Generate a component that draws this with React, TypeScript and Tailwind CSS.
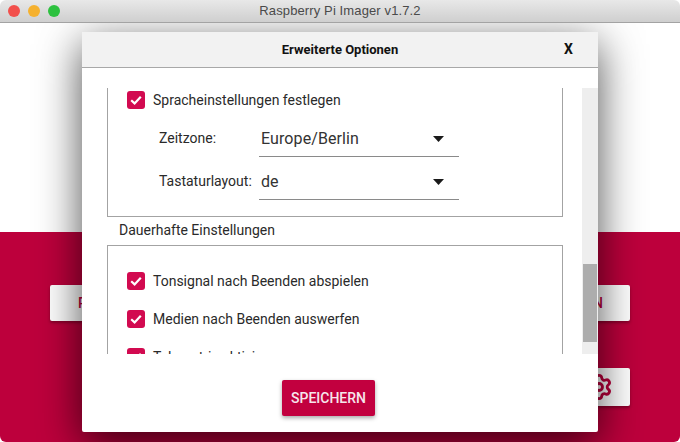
import { Settings } from "lucide-react";

function Check({ label }: { label: string }) {
  return (
    <div className="flex items-center gap-[8px] h-[18px] pl-[19px]">
      <span className="flex items-center justify-center w-[18px] h-[18px] rounded-[3px] bg-[#d20a50]">
        <svg width="14" height="14" viewBox="0 0 14 14" fill="none">
          <path d="M2.2 7.2 L5.6 10.4 L11.8 3.8" stroke="#fff" strokeWidth="2.2" />
        </svg>
      </span>
      <span className="text-[14px] leading-[18px] text-[#2a2a2a]">{label}</span>
    </div>
  );
}

function Select({ label, value }: { label: string; value: string }) {
  return (
    <div className="flex items-start pl-[51px]">
      <span className="w-[100px] text-[14px] leading-[20px] text-[#2a2a2a] pt-[7px]">{label}</span>
      <div className="w-[200px] h-[36px] border-b border-[#8a8a8a] flex items-center justify-between pl-[2px] pr-[15px]">
        <span className="text-[16px] leading-[20px] text-[#333] tracking-[0.1px]">{value}</span>
        <svg width="11" height="6" viewBox="0 0 11 6">
          <path d="M0 0 H11 L5.5 6 Z" fill="#1a1a1a" />
        </svg>
      </div>
    </div>
  );
}

export default function App() {
  return (
    <div className="relative w-[680px] h-[442px] overflow-hidden bg-white font-['Roboto',sans-serif]">
      <div className="relative z-10 h-[23px] rounded-t-[6px] border-b border-[#a3a3a3] bg-gradient-to-b from-[#e8e8e8] to-[#cfcfcf] flex items-center justify-center">
        <div className="absolute left-[8px] top-[5px] flex gap-[8px]">
          <span className="w-[12px] h-[12px] rounded-full bg-[#f2504c]" />
          <span className="w-[12px] h-[12px] rounded-full bg-[#f5b12f]" />
          <span className="w-[12px] h-[12px] rounded-full bg-[#2dc13f]" />
        </div>
        <span className="text-[13px] leading-[20px] text-[#4a4a4a] font-['Liberation_Sans',sans-serif] tracking-[0.12px]">Raspberry Pi Imager v1.7.2</span>
      </div>

      <div className="h-[209px] bg-white" />

      <div className="h-[210px] bg-[#bd003c] rounded-b-[6px] pt-[53px] px-[50px] flex flex-col">
        <div className="flex justify-between">
          <div className="w-[200px] h-[36px] bg-white rounded-[2px] flex items-center pl-[28px] text-[14px] font-medium text-[#bd003c] shadow-[0_2px_3px_rgba(0,0,0,0.3)]">RASPBERRY</div>
          <div className="w-[200px] h-[36px] bg-white rounded-[2px] flex items-center justify-end pr-[27px] text-[14px] font-medium text-[#bd003c] shadow-[0_2px_3px_rgba(0,0,0,0.3)]">SCHREIBEN</div>
        </div>
        <div className="flex justify-end mt-[47px]">
          <div className="w-[60px] h-[38px] bg-white rounded-[2px] flex items-center justify-end pr-[17px] shadow-[0_2px_3px_rgba(0,0,0,0.3)]">
            <Settings size={28} color="#bd003c" strokeWidth={2.4} />
          </div>
        </div>
      </div>

      <div className="absolute left-[82px] top-[32px] w-[516px] h-[400px] bg-white rounded-[2px] flex flex-col shadow-[0_12px_44px_rgba(0,0,0,0.7)]">
        <div className="relative h-[36px] bg-[#f2f2f2] border-b border-[#a8a8a8] flex items-center justify-center">
          <span className="text-[13px] font-bold text-[#111]">Erweiterte Optionen</span>
          <span className="absolute left-[482px] top-[9px] text-[14px] leading-[17px] font-bold text-[#111]">X</span>
        </div>
        <div className="flex justify-between pt-[20px] pl-[25px]">
          <div className="w-[456px] h-[266px] overflow-hidden">
            <div className="h-[131px] -mt-[2px] border border-t-0 border-[#a3a3a3] pt-[5px] flex flex-col">
              <Check label="Spracheinstellungen festlegen" />
              <div className="mt-[12px]"><Select label="Zeitzone:" value="Europe/Berlin" /></div>
              <div className="mt-[7px]"><Select label="Tastaturlayout:" value="de" /></div>
            </div>
            <div className="h-[28px] pl-[12px] text-[14px] leading-[26px] text-[#2a2a2a]">Dauerhafte Einstellungen</div>
            <div className="border border-[#a3a3a3] h-[140px] pt-[26px] flex flex-col gap-[20px]">
              <Check label="Tonsignal nach Beenden abspielen" />
              <Check label="Medien nach Beenden auswerfen" />
              <Check label="Telemetrie aktivieren" />
            </div>
          </div>
          <div className="w-[16px] h-[266px] bg-[#eeeeee] pl-[1px] pr-[1px] pt-[176px]">
            <div className="h-[78px] bg-[#adadad]" />
          </div>
        </div>
        <div className="flex justify-center pt-[26px] pr-[23px]">
          <div className="w-[93px] h-[36px] rounded-[2px] bg-[#c2003f] text-[#f6e6ec] text-[14px] font-medium flex items-center justify-center shadow-[0_2px_4px_rgba(0,0,0,0.35)]">SPEICHERN</div>
        </div>
      </div>
    </div>
  );
}
